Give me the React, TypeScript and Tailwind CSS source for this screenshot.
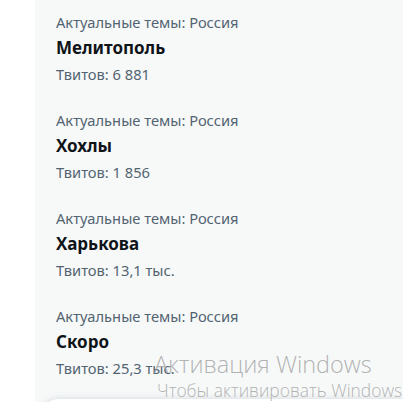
const trends = [
  { place: "Актуальные темы: Россия", topic: "Мелитополь", count: "Твитов: 6 881" },
  { place: "Актуальные темы: Россия", topic: "Хохлы", count: "Твитов: 1 856" },
  { place: "Актуальные темы: Россия", topic: "Харькова", count: "Твитов: 13,1 тыс." },
  { place: "Актуальные темы: Россия", topic: "Скоро", count: "Твитов: 25,3 тыс." },
]

const App: React.FC = () => {
  return (
    <div className="relative flex h-[402px] w-full overflow-hidden bg-white font-['Noto_Sans','Open_Sans',sans-serif]">
      <div className="w-[35px] shrink-0 bg-white" />
      <section className="flex-1 bg-[#f7f9f9]">
        {trends.map((trend) => (
          <div key={trend.topic} className="flex flex-col px-[21px] pt-[12px] pb-[14px]">
            <p className="text-[14.7px] leading-[20px] text-[#536471]">{trend.place}</p>
            <p className="mt-[4px] text-[17px] font-bold leading-[24px] text-[#0f1419]">{trend.topic}</p>
            <p className="mt-[4px] text-[14.7px] leading-[20px] text-[#536471]">{trend.count}</p>
          </div>
        ))}
      </section>

      {/* messages drawer peeking at the bottom */}
      <div className="absolute left-[42px] right-0 top-[399px] h-[40px] rounded-tl-2xl bg-white shadow-[0_0_6px_rgba(101,119,134,0.25)]" />

      {/* activation watermark */}
      <div className="pointer-events-none absolute left-[154px] top-[349px] flex flex-col font-['Open_Sans',sans-serif] font-light text-[#a9a9a9]/90">
        <span className="text-[23.5px] leading-[30px] whitespace-nowrap">Активация Windows</span>
        <span className="ml-[3px] text-[17.4px] leading-[22px] whitespace-nowrap">Чтобы активировать Windows</span>
      </div>
    </div>
  )
}

export default App
